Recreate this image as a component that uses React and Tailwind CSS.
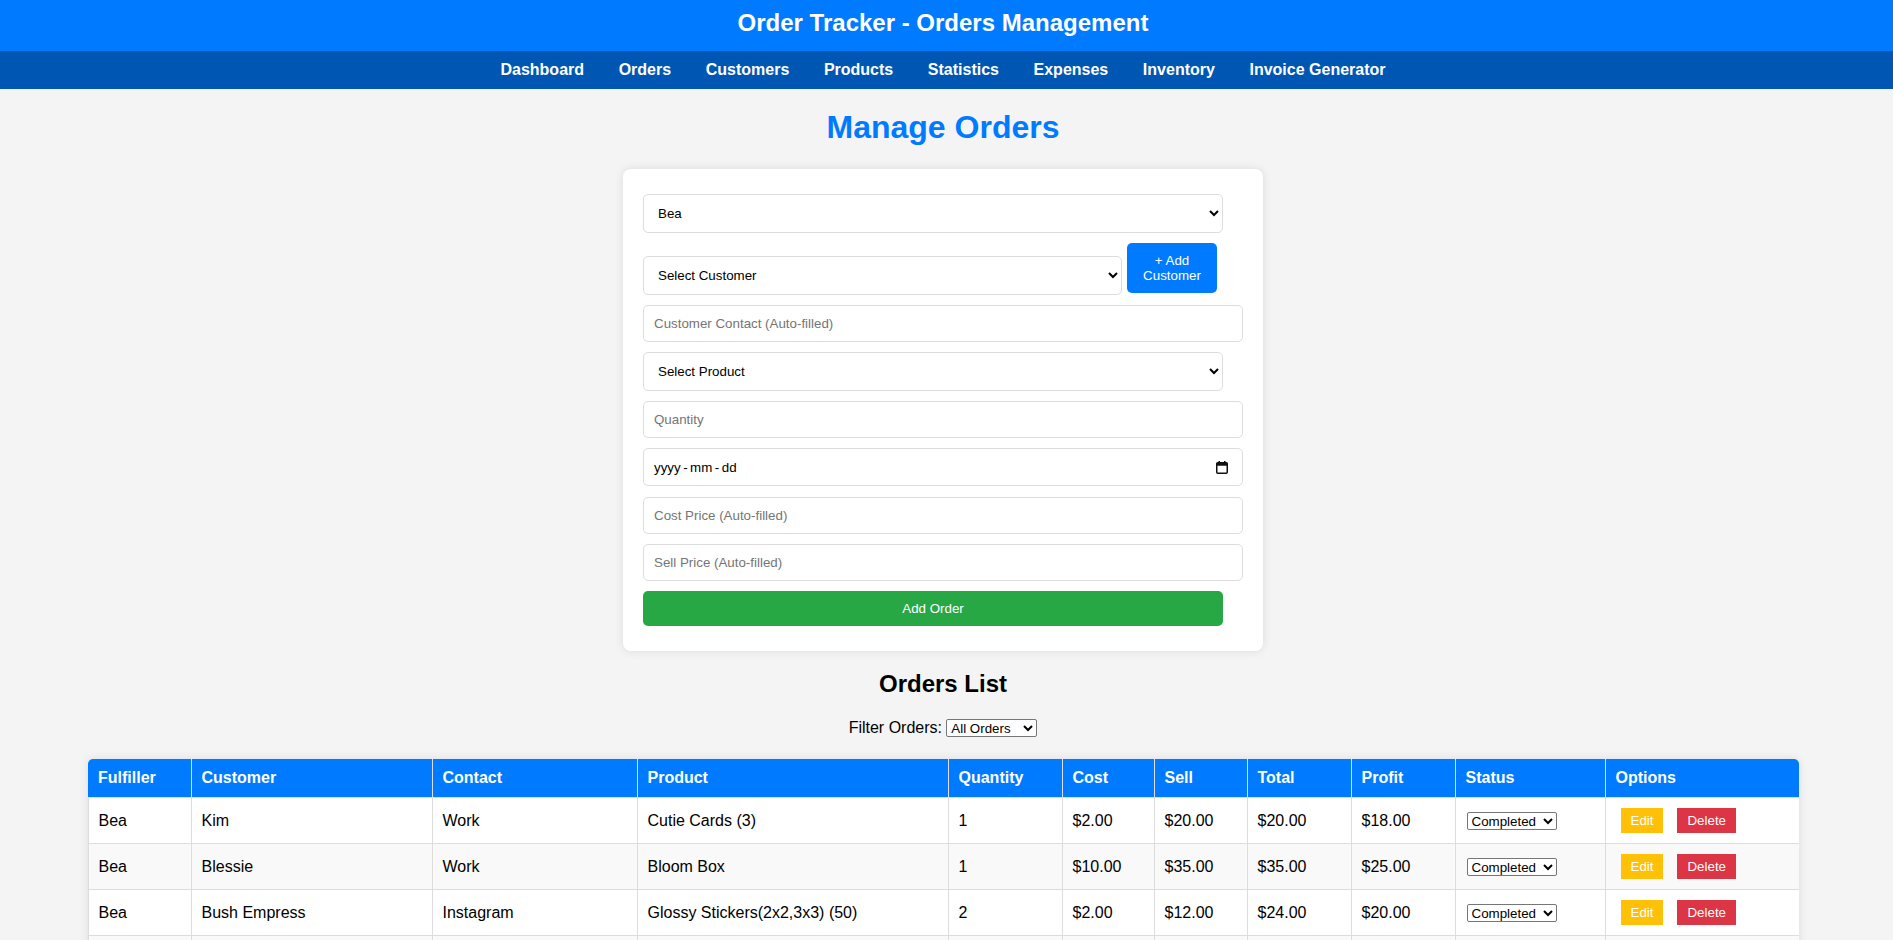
import React from "react";

const navItems = ["Dashboard", "Orders", "Customers", "Products", "Statistics", "Expenses", "Inventory", "Invoice Generator"];

const cols = [
  ["Fulfiller", 103],
  ["Customer", 241],
  ["Contact", 205],
  ["Product", 311],
  ["Quantity", 114],
  ["Cost", 92],
  ["Sell", 93],
  ["Total", 104],
  ["Profit", 104],
  ["Status", 150],
  ["Options", 194],
];

const rows = [
  ["Bea", "Kim", "Work", "Cutie Cards (3)", "1", "$2.00", "$20.00", "$20.00", "$18.00"],
  ["Bea", "Blessie", "Work", "Bloom Box", "1", "$10.00", "$35.00", "$35.00", "$25.00"],
  ["Bea", "Bush Empress", "Instagram", "Glossy Stickers(2x2,3x3) (50)", "2", "$2.00", "$12.00", "$24.00", "$20.00"],
  ["Bea", "Kim", "Work", "Bloom Box", "1", "$10.00", "$35.00", "$35.00", "$25.00"],
  ["Bea", "Blessie", "Instagram", "Cutie Cards (3)", "1", "$2.00", "$20.00", "$20.00", "$18.00"],
];

const inputCls =
  "block w-[600px] h-[37px] px-[10px] border border-[#dddddd] rounded-[5px] bg-white text-[13.33px] leading-[normal] text-black placeholder:text-[#757575] outline-none";
const selectCls =
  "block w-[580px] h-[38.5px] px-[10px] border border-[#dddddd] rounded-[5px] bg-white text-[13.33px] leading-[normal] text-black outline-none";

function CalendarIcon() {
  return (
    <svg width="12" height="13" viewBox="0 0 12 13" fill="none">
      <rect x="0.75" y="1.75" width="10.5" height="10.5" rx="1" stroke="#111" strokeWidth="1.5" />
      <rect x="0.75" y="1.75" width="10.5" height="3" fill="#111" />
      <rect x="2.5" y="0" width="1.5" height="2.5" fill="#111" />
      <rect x="8" y="0" width="1.5" height="2.5" fill="#111" />
    </svg>
  );
}

export default function App() {
  return (
    <div className="min-h-screen bg-[#f4f4f4] text-black" style={{ fontFamily: '"Liberation Sans", Arial, sans-serif' }}>
      <header className="bg-[#007bff] h-[51px]">
        <div className="w-[1886px] pt-[8.5px] text-center">
          <h1 className="text-[24px] font-bold leading-[normal] text-white">Order Tracker - Orders Management</h1>
        </div>
      </header>
      <nav className="bg-[#0056b3] h-[38px]">
        <div className="w-[1886px] pt-[9.5px] flex justify-center gap-[34.6px]">
          {navItems.map((n) => (
            <span key={n} className="text-[16px] font-bold leading-[normal] text-white">
              {n}
            </span>
          ))}
        </div>
      </nav>

      <main className="w-[1886px] pt-[19.6px] flex flex-col items-center">
        <h2 className="text-[32px] font-bold leading-[normal] text-[#007bff]">Manage Orders</h2>

        <div className="mt-[23.6px] w-[640px] bg-white rounded-[8px] shadow-[0_0_10px_rgba(0,0,0,0.1)] px-[20px] pt-[25px] pb-[25px] flex flex-col">
          <select className={selectCls} defaultValue="Bea">
            <option>Bea</option>
          </select>

          <div className="mt-[10.5px] flex items-start gap-[5px]">
            <select className="mt-[13px] block w-[479px] h-[38.5px] px-[10px] border border-[#dddddd] rounded-[5px] bg-white text-[13.33px] leading-[normal] text-black outline-none">
              <option>Select Customer</option>
            </select>
            <button className="w-[90px] h-[50px] bg-[#007bff] text-white rounded-[5px] text-[13.33px] leading-[normal] text-center">
              + Add
              <br />
              Customer
            </button>
          </div>

          <input className={`${inputCls} mt-[10.5px]`} placeholder="Customer Contact (Auto-filled)" />

          <select className={`${selectCls} mt-[10px]`}>
            <option>Select Product</option>
          </select>

          <input className={`${inputCls} mt-[10.5px]`} placeholder="Quantity" />

          <div className="mt-[10px] w-[600px] h-[38px] pl-[10px] pr-[14px] border border-[#dddddd] rounded-[5px] bg-white flex items-center justify-between text-[13.33px] leading-[normal] text-black">
            <span className="flex items-center">
              <span>yyyy</span>
              <span className="mx-[2.5px]">-</span>
              <span>mm</span>
              <span className="mx-[2.5px]">-</span>
              <span>dd</span>
            </span>
            <CalendarIcon />
          </div>

          <input className={`${inputCls} mt-[11px]`} placeholder="Cost Price (Auto-filled)" />

          <input className={`${inputCls} mt-[10px]`} placeholder="Sell Price (Auto-filled)" />

          <button className="mt-[10px] w-[580px] h-[35px] bg-[#28a745] text-white rounded-[5px] text-[13.33px] leading-[normal]">
            Add Order
          </button>
        </div>

        <h2 className="mt-[18.5px] text-[24px] font-bold leading-[normal] text-black">Orders List</h2>

        <div className="mt-[20px] h-[20px] flex items-center justify-center text-[16px] leading-[normal]">
          <span>Filter Orders:</span>
          <select className="ml-[4.4px] w-[91px] h-[18px] border border-[#767676] rounded-[2px] bg-white text-[13.33px] leading-[normal] text-black">
            <option>All Orders</option>
          </select>
        </div>

        <div className="mt-[21px] w-[1711px] rounded-t-[5px] overflow-hidden shadow-[0_0_10px_rgba(0,0,0,0.1)] bg-white">
          <table className="w-[1711px] table-fixed border-collapse text-[16px] leading-[normal]">
            <colgroup>
              {cols.map(([n, w]) => (
                <col key={n} style={{ width: w }} />
              ))}
            </colgroup>
            <thead>
              <tr className="bg-[#007bff] text-white">
                {cols.map(([n]) => (
                  <th key={n} className="border border-[#dddddd] border-t-0 first:border-l-0 last:border-r-0 p-[10px] text-left font-bold">
                    {n}
                  </th>
                ))}
              </tr>
            </thead>
            <tbody>
              {rows.map((r, i) => (
                <tr key={i} className={i % 2 === 1 ? "bg-[#f9f9f9]" : "bg-white"}>
                  {r.map((c, j) => (
                    <td key={j} className="border border-[#dddddd] px-[10px] pt-[11px] pb-[9px] text-left align-middle">
                      {c}
                    </td>
                  ))}
                  <td className="border border-[#dddddd] px-[10px] pt-[11px] pb-[9px] text-left align-middle">
                    <select className="block ml-[1px] w-[90px] h-[18px] border border-[#767676] rounded-[2px] bg-white text-[13.33px] leading-[normal] text-black">
                      <option>Completed</option>
                      <option>Pending</option>
                    </select>
                  </td>
                  <td className="border border-[#dddddd] px-[10px] pt-[10.5px] pb-[9.5px] text-left align-middle">
                    <div className="flex items-center ml-[5px] gap-[14px]">
                      <button className="h-[25px] px-[10px] bg-[#ffc107] text-white text-[13.33px] leading-[normal]">Edit</button>
                      <button className="h-[25px] px-[10px] bg-[#dc3545] text-white text-[13.33px] leading-[normal]">Delete</button>
                    </div>
                  </td>
                </tr>
              ))}
            </tbody>
          </table>
        </div>
        <div className="h-[40px]" />
      </main>
    </div>
  );
}
